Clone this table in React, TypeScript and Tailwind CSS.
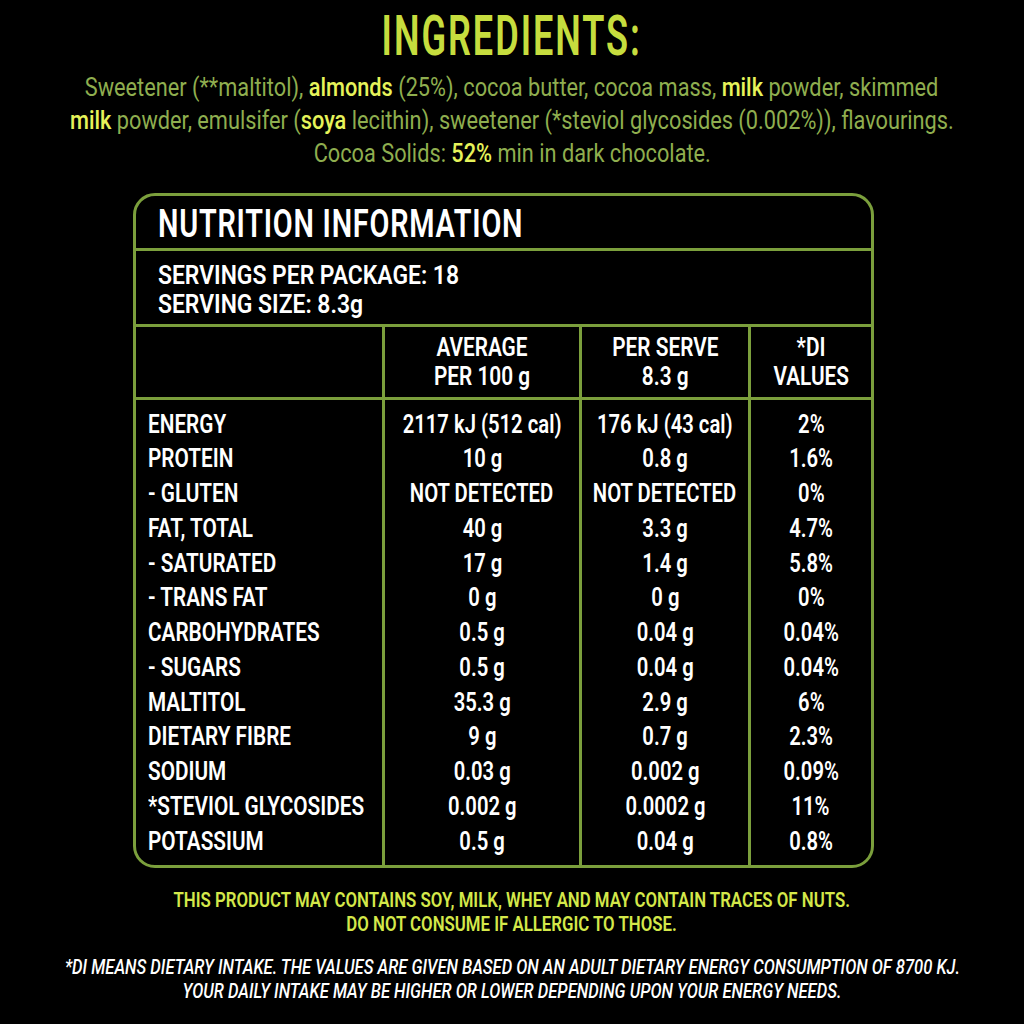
import React from "react"

interface Row {
  label: string
  avg: string
  serve: string
  di: string
}

const rows: Row[] = [
  { label: "ENERGY", avg: "2117 kJ (512 cal)", serve: "176 kJ (43 cal)", di: "2%" },
  { label: "PROTEIN", avg: "10 g", serve: "0.8 g", di: "1.6%" },
  { label: "- GLUTEN", avg: "NOT DETECTED", serve: "NOT DETECTED", di: "0%" },
  { label: "FAT, TOTAL", avg: "40 g", serve: "3.3 g", di: "4.7%" },
  { label: "- SATURATED", avg: "17 g", serve: "1.4 g", di: "5.8%" },
  { label: "- TRANS FAT", avg: "0 g", serve: "0 g", di: "0%" },
  { label: "CARBOHYDRATES", avg: "0.5 g", serve: "0.04 g", di: "0.04%" },
  { label: "- SUGARS", avg: "0.5 g", serve: "0.04 g", di: "0.04%" },
  { label: "MALTITOL", avg: "35.3 g", serve: "2.9 g", di: "6%" },
  { label: "DIETARY FIBRE", avg: "9 g", serve: "0.7 g", di: "2.3%" },
  { label: "SODIUM", avg: "0.03 g", serve: "0.002 g", di: "0.09%" },
  { label: "*STEVIOL GLYCOSIDES", avg: "0.002 g", serve: "0.0002 g", di: "11%" },
  { label: "POTASSIUM", avg: "0.5 g", serve: "0.04 g", di: "0.8%" },
]

// condensed look: Roboto squeezed horizontally
function Sq({ children, className = "" }: { children: React.ReactNode; className?: string }) {
  return <span className={`inline-block whitespace-nowrap ${className}`}>{children}</span>
}

function Hi({ children }: { children: React.ReactNode }) {
  return <span className="text-[#e6f35a] font-medium">{children}</span>
}

export default function App() {
  return (
    <div className="w-[1024px] h-[1024px] bg-black overflow-hidden font-['Roboto',sans-serif]">
      {/* Ingredients */}
      <div className="pt-2 flex justify-center h-[64px]">
        <Sq className="text-[56px] leading-[56px] font-semibold tracking-[3px] text-[#c6dd3e] scale-x-[0.645]">
          INGREDIENTS:
        </Sq>
      </div>
      <div className="text-[25px] leading-[33px] text-[#8fae4f] mt-[7px]">
        <div className="flex justify-center">
          <Sq className="scale-x-[0.87]">
            Sweetener (**maltitol), <Hi>almonds</Hi> (25%), cocoa butter, cocoa mass, <Hi>milk</Hi> powder, skimmed
          </Sq>
        </div>
        <div className="flex justify-center">
          <Sq className="scale-x-[0.87]">
            <Hi>milk</Hi> powder, emulsifer (<Hi>soya</Hi> lecithin), sweetener (*steviol glycosides (0.002%)), flavourings.
          </Sq>
        </div>
        <div className="flex justify-center">
          <Sq className="scale-x-[0.87]">
            Cocoa Solids: <Hi>52%</Hi> min in dark chocolate.
          </Sq>
        </div>
      </div>

      {/* Nutrition panel */}
      <div className="ml-[133px] mt-[23px] w-[741px] border-[3px] border-[#7b9f3c] rounded-[22px] overflow-hidden text-white">
        <div className="h-[52px] pl-[22px] pt-[2px] text-[38px] leading-[52px] font-semibold">
          <Sq className="tracking-[1px] scale-x-[0.76] origin-left">NUTRITION INFORMATION</Sq>
        </div>
        <div className="h-[76px] border-t-[3px] border-[#7b9f3c] pl-[22px] pt-[5px] flex flex-col justify-center text-[26px] leading-[29px] font-semibold">
          <div>
            <Sq className="scale-x-[0.88] origin-left">SERVINGS PER PACKAGE: 18</Sq>
          </div>
          <div>
            <Sq className="scale-x-[0.88] origin-left">SERVING SIZE: 8.3g</Sq>
          </div>
        </div>
        <div className="grid grid-cols-[246px_197px_169px_1fr] border-t-[3px] border-[#7b9f3c] h-[73px] text-[26px] leading-[29px] font-semibold">
          <div />
          <div className="border-l-[3px] border-[#7b9f3c] flex flex-col items-center justify-center">
            <Sq className="scale-x-[0.8]">AVERAGE</Sq>
            <Sq className="scale-x-[0.8]">PER 100 g</Sq>
          </div>
          <div className="border-l-[3px] border-[#7b9f3c] flex flex-col items-center justify-center">
            <Sq className="scale-x-[0.8]">PER SERVE</Sq>
            <Sq className="scale-x-[0.8]">8.3 g</Sq>
          </div>
          <div className="border-l-[3px] border-[#7b9f3c] flex flex-col items-center justify-center">
            <Sq className="scale-x-[0.8]">*DI</Sq>
            <Sq className="scale-x-[0.8]">VALUES</Sq>
          </div>
        </div>
        <div className="grid grid-cols-[246px_197px_169px_1fr] border-t-[3px] border-[#7b9f3c] h-[468px] text-[25px] leading-[34.75px] font-semibold">
          <div className="pt-[7.5px] pl-[12px]">
            {rows.map((r) => (
              <div key={r.label}>
                <Sq className="scale-x-[0.83] origin-left">{r.label}</Sq>
              </div>
            ))}
          </div>
          <div className="pt-[7.5px] border-l-[3px] border-[#7b9f3c]">
            {rows.map((r) => (
              <div key={r.label} className="flex justify-center">
                <Sq className="scale-x-[0.81]">{r.avg}</Sq>
              </div>
            ))}
          </div>
          <div className="pt-[7.5px] border-l-[3px] border-[#7b9f3c]">
            {rows.map((r) => (
              <div key={r.label} className="flex justify-center">
                <Sq className="scale-x-[0.81]">{r.serve}</Sq>
              </div>
            ))}
          </div>
          <div className="pt-[7.5px] border-l-[3px] border-[#7b9f3c]">
            {rows.map((r) => (
              <div key={r.label} className="flex justify-center">
                <Sq className="scale-x-[0.81]">{r.di}</Sq>
              </div>
            ))}
          </div>
        </div>
      </div>

      {/* Allergens */}
      <div className="mt-[20px] text-[21px] leading-[24px] font-semibold text-[#d4e84a]">
        <div className="flex justify-center">
          <Sq className="scale-x-[0.8]">THIS PRODUCT MAY CONTAINS SOY, MILK, WHEY AND MAY CONTAIN TRACES OF NUTS.</Sq>
        </div>
        <div className="flex justify-center">
          <Sq className="scale-x-[0.8]">DO NOT CONSUME IF ALLERGIC TO THOSE.</Sq>
        </div>
      </div>

      {/* Footnote */}
      <div className="mt-[19px] text-[21px] leading-[24px] font-medium italic text-white">
        <div className="flex justify-center">
          <Sq className="scale-x-[0.79]">*DI MEANS DIETARY INTAKE. THE VALUES ARE GIVEN BASED ON AN ADULT DIETARY ENERGY CONSUMPTION OF 8700 KJ.</Sq>
        </div>
        <div className="flex justify-center">
          <Sq className="scale-x-[0.79]">YOUR DAILY INTAKE MAY BE HIGHER OR LOWER DEPENDING UPON YOUR ENERGY NEEDS.</Sq>
        </div>
      </div>
    </div>
  )
}
